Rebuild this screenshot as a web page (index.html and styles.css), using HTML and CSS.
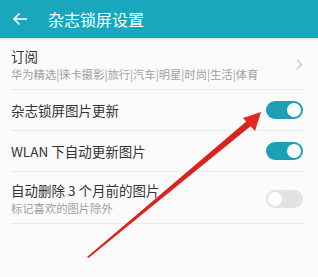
FILE: index.html
```html
<!DOCTYPE html>
<html lang="zh">
<head>
  <meta charset="UTF-8">
  <title>杂志锁屏设置</title>
  <link rel="stylesheet" href="styles.css">
</head>
<body>
  <div class="header">
    <svg class="back" width="16" height="14" viewBox="0 0 16 14">
      <path d="M15 7H2M7.5 1.5L2 7l5.5 5.5" fill="none" stroke="#fff" stroke-width="1.6"/>
    </svg>
    <span class="title">杂志锁屏设置</span>
  </div>

  <div class="list">
    <div class="row sub">
      <div class="text">
        <div class="main">订阅</div>
        <div class="desc">华为精选|徕卡摄影|旅行|汽车|明星|时尚|生活|体育</div>
      </div>
      <svg class="chevron" width="7" height="11" viewBox="0 0 7 11">
        <path d="M1 1l4.5 4.5L1 10" fill="none" stroke="#c4c4c4" stroke-width="1.3"/>
      </svg>
    </div>
    <div class="row">
      <div class="main">杂志锁屏图片更新</div>
      <span class="toggle on"></span>
    </div>
    <div class="row">
      <div class="main">WLAN 下自动更新图片</div>
      <span class="toggle on"></span>
    </div>
    <div class="row sub">
      <div class="text">
        <div class="main">自动删除 3 个月前的图片</div>
        <div class="desc">标记喜欢的图片除外</div>
      </div>
      <span class="toggle"></span>
    </div>
  </div>

  <!-- red annotation arrow -->
  <svg class="arrow" width="318" height="277" viewBox="0 0 318 277">
    <polygon points="87,257 88.5,258 252,125 248,120" fill="#d9241e"/>
    <polygon points="261,112 243,118 255,131" fill="#e8261f"/>
  </svg>
</body>
</html>
```

FILE: styles.css
```css
body {
  margin: 0;
  background: #fbfbfb;
  font-family: "Noto Sans CJK SC", "Noto Sans", sans-serif;
  color: #333;
  width: 318px;
  height: 277px;
  overflow: hidden;
  position: relative;
}

/* Header */
.header {
  height: 38px;
  background: #18a7bd;
  display: flex;
  align-items: center;
  padding-left: 12px;
  box-shadow: 0 1px 2px rgba(0, 0, 0, 0.15);
}
.back {
  margin-right: 20px;
}
.title {
  color: #fff;
  font-size: 16px;
}

/* List */
.list {
  padding: 0 13px 0 11px;
}
.row {
  display: flex;
  align-items: center;
  justify-content: space-between;
  height: 40px;
  border-bottom: 1px solid #ebebeb;
}
.row.sub {
  height: 52px;
  padding-top: 2px;
  box-sizing: border-box;
}
.main {
  font-size: 13.5px;
  line-height: 18px;
}
.desc {
  font-size: 11.3px;
  color: #a0a0a0;
  line-height: 16px;
  margin-top: 1px;
}
.chevron {
  margin-right: 2px;
}

/* Switch */
.toggle {
  width: 37px;
  height: 18px;
  border-radius: 9px;
  background: #e2e2e2;
  position: relative;
  margin-right: 2px;
}
.toggle::after {
  content: "";
  position: absolute;
  top: 2px;
  left: 2px;
  width: 14px;
  height: 14px;
  border-radius: 50%;
  background: #fff;
}
.toggle.on {
  background: #1ca0b5;
}
.toggle.on::after {
  left: 21px;
}

.arrow {
  position: absolute;
  left: 0;
  top: 0;
}
```
